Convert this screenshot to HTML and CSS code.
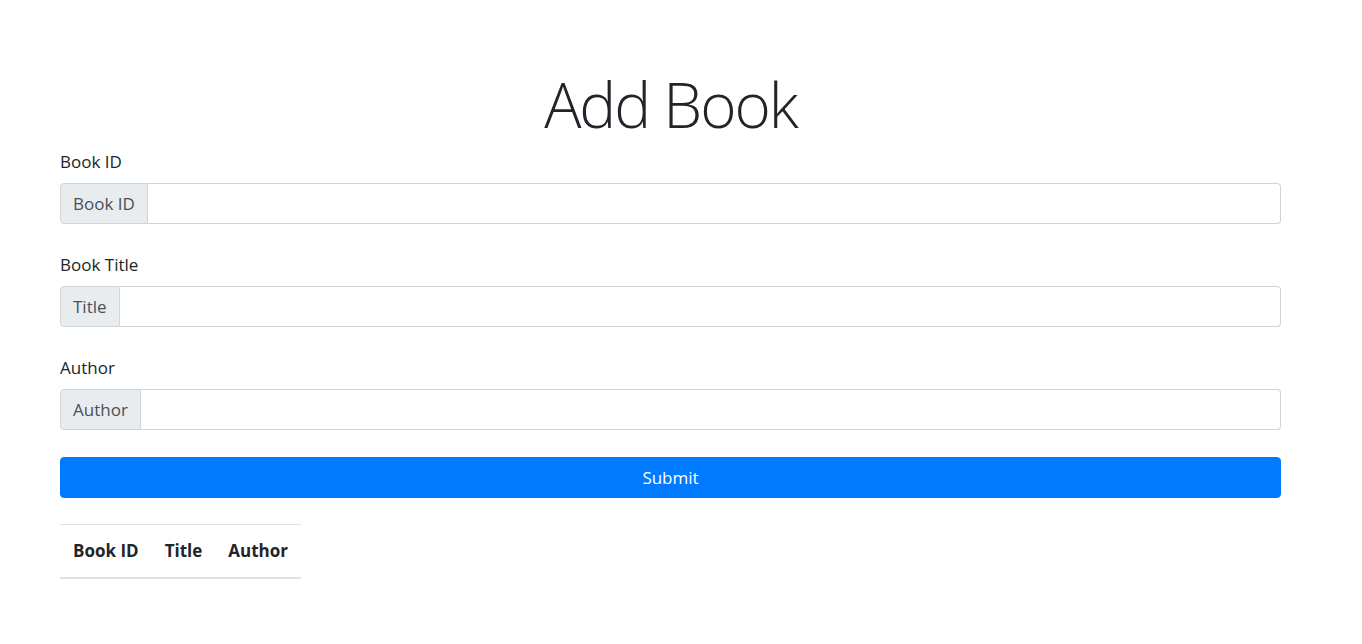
FILE: index.html
```html
<!DOCTYPE html>
<html lang="en">
<head>
<meta charset="utf-8">
<title>Add Book</title>
<link rel="stylesheet" href="styles.css">
</head>
<body>
<div class="container">
  <h1 class="title">Add Book</h1>
  <form class="book-form">
    <div class="form-group">
      <label class="form-label" for="bookId">Book ID</label>
      <div class="input-group">
        <span class="input-group-text">Book ID</span>
        <input class="form-control" id="bookId" type="text">
      </div>
    </div>
    <div class="form-group">
      <label class="form-label" for="bookTitle">Book Title</label>
      <div class="input-group">
        <span class="input-group-text">Title</span>
        <input class="form-control" id="bookTitle" type="text">
      </div>
    </div>
    <div class="form-group last">
      <label class="form-label" for="bookAuthor">Author</label>
      <div class="input-group">
        <span class="input-group-text">Author</span>
        <input class="form-control" id="bookAuthor" type="text">
      </div>
    </div>
    <button class="btn-submit" type="button">Submit</button>
  </form>
  <table class="book-table">
    <thead>
      <tr>
        <th>Book ID</th>
        <th>Title</th>
        <th>Author</th>
      </tr>
    </thead>
    <tbody></tbody>
  </table>
</div>
</body>
</html>
```

FILE: styles.css
```css
* { box-sizing: border-box; }

html, body {
  margin: 0;
  padding: 0;
  background: #fff;
}

body {
  font-family: "Segoe UI", "Open Sans", "Noto Sans", sans-serif;
  font-size: 17px;
  line-height: 24px;
  color: #212529;
}

.container {
  width: 1221px;
  margin-left: 60px;
  padding-top: 67px;
}

.title {
  margin: 0 0 8px 0;
  font-size: 62px;
  font-weight: 300;
  letter-spacing: -2px;
  line-height: 75px;
  text-align: center;
  color: #212529;
}

.book-form {
  display: flex;
  flex-direction: column;
}

.form-group {
  display: flex;
  flex-direction: column;
  margin-bottom: 29px;
}

.form-group.last {
  margin-bottom: 27px;
}

.form-label {
  display: block;
  line-height: 24px;
  margin-bottom: 9px;
}

.input-group {
  display: flex;
  height: 41px;
}

.input-group-text {
  display: flex;
  align-items: center;
  padding: 0 12px;
  background: #e9ecef;
  border: 1px solid #ced4da;
  border-radius: 4px 0 0 4px;
  color: #495057;
  white-space: nowrap;
}

.form-control {
  flex: 1;
  min-width: 0;
  height: 41px;
  margin: 0;
  padding: 0 12px;
  border: 1px solid #ced4da;
  border-left: 0;
  border-radius: 0 4px 4px 0;
  font: inherit;
  color: #495057;
  background: #fff;
  outline: none;
}

.btn-submit {
  display: block;
  width: 100%;
  height: 41px;
  margin: 0;
  padding: 0;
  border: 1px solid #007bff;
  border-radius: 4px;
  background: #007bff;
  color: #fff;
  font: inherit;
  cursor: pointer;
}

.book-table {
  margin-top: 26px;
  border-collapse: collapse;
  color: #212529;
}

.book-table th {
  padding: 12px 13px;
  line-height: 28px;
  font-weight: 700;
  text-align: left;
  border-top: 1px solid #dee2e6;
  border-bottom: 2px solid #dee2e6;
}
```
